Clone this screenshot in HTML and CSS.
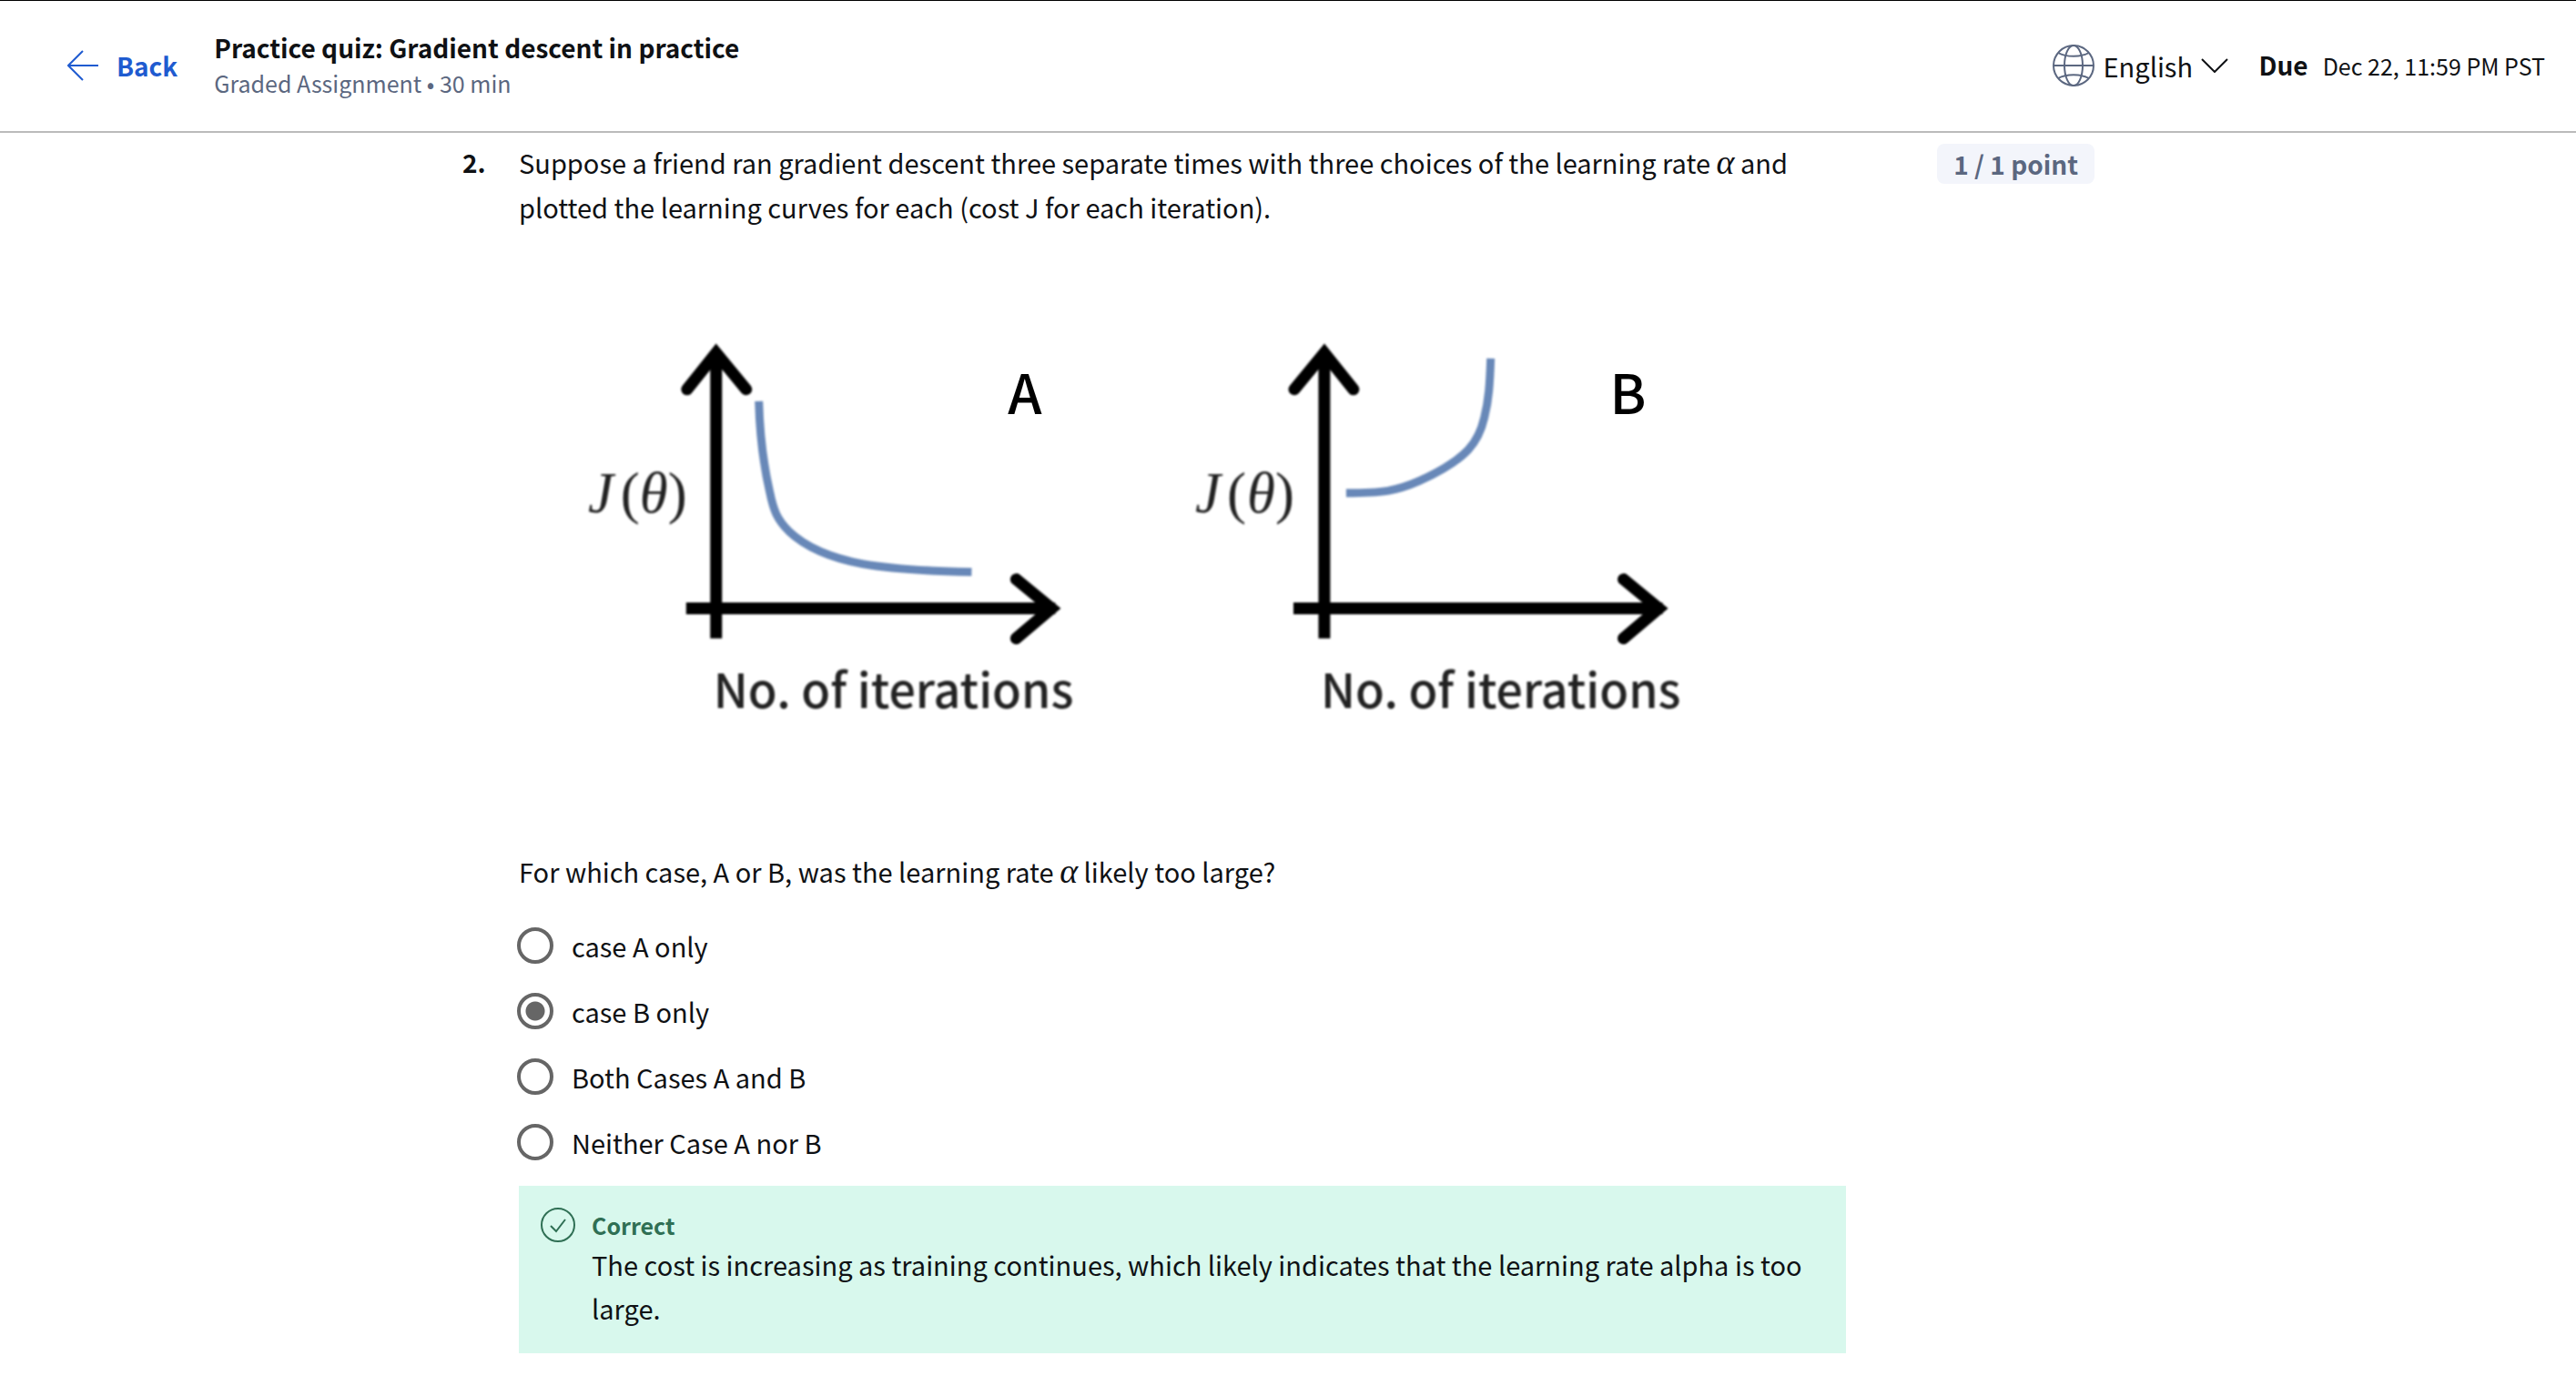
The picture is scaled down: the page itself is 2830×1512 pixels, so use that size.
FILE: index.html
```html
<!DOCTYPE html>
<html lang="en">
<head>
  <meta charset="utf-8">
  <title>Practice quiz: Gradient descent in practice</title>
  <meta name="viewport" content="width=device-width, initial-scale=1">
  <link rel="stylesheet" href="styles.css">
</head>
<body>
  <header class="topbar">
    <a class="back" href="#">
      <svg class="back-icon" viewBox="0 0 34 34" aria-hidden="true"><path d="M17 1 1 17l16 16M1 17h33"/></svg>
      Back
    </a>
    <div class="heading">
      <h1 class="title">Practice quiz: Gradient descent in practice</h1>
      <p class="subtitle">Graded Assignment • 30 min</p>
    </div>
    <div class="language">
      <svg class="globe" viewBox="0 0 46 46" aria-hidden="true">
        <circle cx="23" cy="23" r="22"/>
        <ellipse cx="23" cy="23" rx="10" ry="22"/>
        <path d="M1 23h44M6 9c9 5 25 5 34 0M6 37c9-5 25-5 34 0"/>
      </svg>
      <div class="select-wrap">
        <select class="select" aria-label="Language"><option>English</option></select>
        <svg class="chevron" viewBox="0 0 30 16" aria-hidden="true"><path d="m1 1 14 14L29 1"/></svg>
      </div>
    </div>
    <p class="due"><strong class="due-label">Due</strong><span class="due-date">Dec 22, 11:59 PM PST</span></p>
  </header>

  <main class="question">
    <span class="number">2.</span>
    <div class="body">
      <p class="lead">Suppose a friend ran gradient descent three separate times with three choices of the learning rate <i class="math">α</i> and plotted the learning curves for each (cost J for each iteration).</p>

      <svg class="figure" viewBox="0 0 1460 600" role="img" aria-label="Learning curves for cases A and B">
        <g class="plot">
          <path class="axis" d="M217 90V400M184 367H590"/>
          <path class="axis axis-head" d="M185 126 217 86 250 126M547 335 586 367 547 400"/>
          <path class="curve" d="M264 139C265 176 270 213 276 239C280 259 284 269 297 282C319 303 352 313 378 318C413 324 447 326 498 327"/>
          <text class="cost" x="76" y="261">J</text>
          <text class="cost paren" x="112" y="261">(</text>
          <text class="cost" x="133" y="261">θ</text>
          <text class="cost paren" x="164" y="261">)</text>
          <text class="axis-label" x="214" y="477">No. of iterations</text>
        </g>
        <text class="case" x="538" y="153">A</text>
        <g class="plot">
          <path class="axis" d="M886 90V400M852 367H1258"/>
          <path class="axis axis-head" d="M853 126 886 86 918 126M1215 335 1254 367 1215 400"/>
          <path class="curve" d="M910 240C950 240 965 238 990 227C1045 202 1056 183 1062 157C1067 137 1068 120 1069 92"/>
          <text class="cost" x="744" y="261">J</text>
          <text class="cost paren" x="779" y="261">(</text>
          <text class="cost" x="801" y="261">θ</text>
          <text class="cost paren" x="832" y="261">)</text>
          <text class="axis-label" x="882" y="477">No. of iterations</text>
        </g>
        <text class="case" x="1200" y="153">B</text>
      </svg>

      <fieldset class="choices">
        <legend class="legend">For which case, A or B, was the learning rate <i class="math">α</i> likely too large?</legend>
        <label class="choice"><input class="radio" type="radio" name="answer">case A only</label>
        <label class="choice"><input class="radio" type="radio" name="answer" checked>case B only</label>
        <label class="choice"><input class="radio" type="radio" name="answer">Both Cases A and B</label>
        <label class="choice"><input class="radio" type="radio" name="answer">Neither Case A nor B</label>
      </fieldset>

      <section class="feedback">
        <svg class="check" viewBox="0 0 38 38" aria-hidden="true"><circle cx="19" cy="19" r="18"/><path d="m11 20 6 6 10-13"/></svg>
        <div>
          <h2 class="verdict">Correct</h2>
          <p>The cost is increasing as training continues, which likely indicates that the learning rate alpha is too large.</p>
        </div>
      </section>
    </div>
    <span class="points">1 / 1 point</span>
  </main>
</body>
</html>
```

FILE: styles.css
```css
* {
  box-sizing: border-box;
}

body {
  margin: 0;
  background: #fff;
  color: #0f1114;
  font-family: "Noto Sans CJK SC", "Noto Sans", sans-serif;
  font-size: 29px;
  line-height: 48px;
}

h1,
h2,
p {
  margin: 0;
}

.topbar {
  display: flex;
  align-items: center;
  height: 146px;
  padding: 0 34px 2px 74px;
  border-top: 1px solid #000;
  border-bottom: 2px solid #bbb;
}

.back {
  display: flex;
  align-items: center;
  gap: 20px;
  color: #1f5bd0;
  font-size: 28px;
  font-weight: 600;
  text-decoration: none;
}

.back-icon {
  width: 34px;
  height: 34px;
}

.back-icon,
.globe,
.chevron,
.check {
  fill: none;
  stroke: currentColor;
  stroke-width: 2;
}

.heading {
  margin: 0 auto 0 40px;
}

.title {
  font-size: 28px;
  font-weight: 600;
  line-height: 38px;
}

.subtitle {
  color: #5b6780;
  font-family: "Noto Sans CJK KR", "Noto Sans", sans-serif;
  font-size: 25px;
  line-height: 40px;
}

.language {
  display: flex;
  align-items: center;
  gap: 10px;
}

.globe {
  width: 46px;
  height: 46px;
  color: #5b6780;
}

.select-wrap {
  display: grid;
  align-items: center;
}

.select,
.chevron {
  grid-area: 1 / 1;
}

.select {
  appearance: none;
  margin: 0;
  padding: 0 38px 0 0;
  border: 0;
  background: none;
  color: inherit;
  font: inherit;
}

.chevron {
  justify-self: end;
  width: 30px;
  height: 16px;
  pointer-events: none;
}

.due {
  display: flex;
  align-items: baseline;
  gap: 16px;
  margin-left: 34px;
}

.due-label {
  font-size: 28px;
  font-weight: 600;
}

.due-date {
  font-size: 25px;
}

.question {
  display: grid;
  grid-template-columns: 67px minmax(0, 1fr) auto;
  align-items: start;
  max-width: 1824px;
  margin: 0 auto;
  padding: 8px 26px 24px 0;
}

.number {
  padding-left: 5px;
  font-size: 28px;
  font-weight: 600;
}

.lead {
  line-height: 49px;
}

.math {
  font-family: "Liberation Serif", serif;
  font-size: 38px;
}

.figure {
  display: block;
  width: 100%;
  margin: 50px 0 32px;
}

.plot {
  filter: blur(1px);
}

.axis {
  fill: none;
  stroke: #000;
  stroke-width: 13;
}

.axis-head {
  stroke-linecap: round;
}

.curve {
  fill: none;
  stroke: #6888b8;
  stroke-width: 9;
}

.cost {
  fill: #222;
  font: italic 63px "Liberation Serif", serif;
}

.paren {
  font-style: normal;
}

.axis-label {
  fill: #222;
  font-size: 52px;
  font-weight: 500;
}

.case {
  fill: #000;
  font-size: 60px;
  font-weight: 500;
}

.choices {
  min-width: 0;
  margin: 0;
  padding: 0;
  border: 0;
}

.legend {
  margin-bottom: 22px;
  padding: 0;
}

.choice {
  display: flex;
  align-items: center;
  gap: 20px;
  height: 72px;
}

.radio {
  appearance: none;
  width: 40px;
  height: 40px;
  margin: 0 0 0 -2px;
  border: 4px solid #666;
  border-radius: 50%;
}

.radio:checked {
  background: radial-gradient(circle, #666 10px, transparent 11px);
}

.feedback {
  display: flex;
  align-items: flex-start;
  gap: 18px;
  margin-top: 12px;
  padding: 24px 24px 26px;
  background: #d8f8ed;
}

.check {
  flex: none;
  width: 38px;
  height: 38px;
  color: #2f6f54;
}

.verdict {
  color: #2f6f54;
  font-size: 25px;
  font-weight: 700;
  line-height: 38px;
}

.points {
  margin: 4px 0 0 100px;
  padding: 0 18px;
  border-radius: 8px;
  background: #f3f5fb;
  color: #5b6780;
  font-size: 28px;
  font-weight: 600;
  line-height: 44px;
}
```
